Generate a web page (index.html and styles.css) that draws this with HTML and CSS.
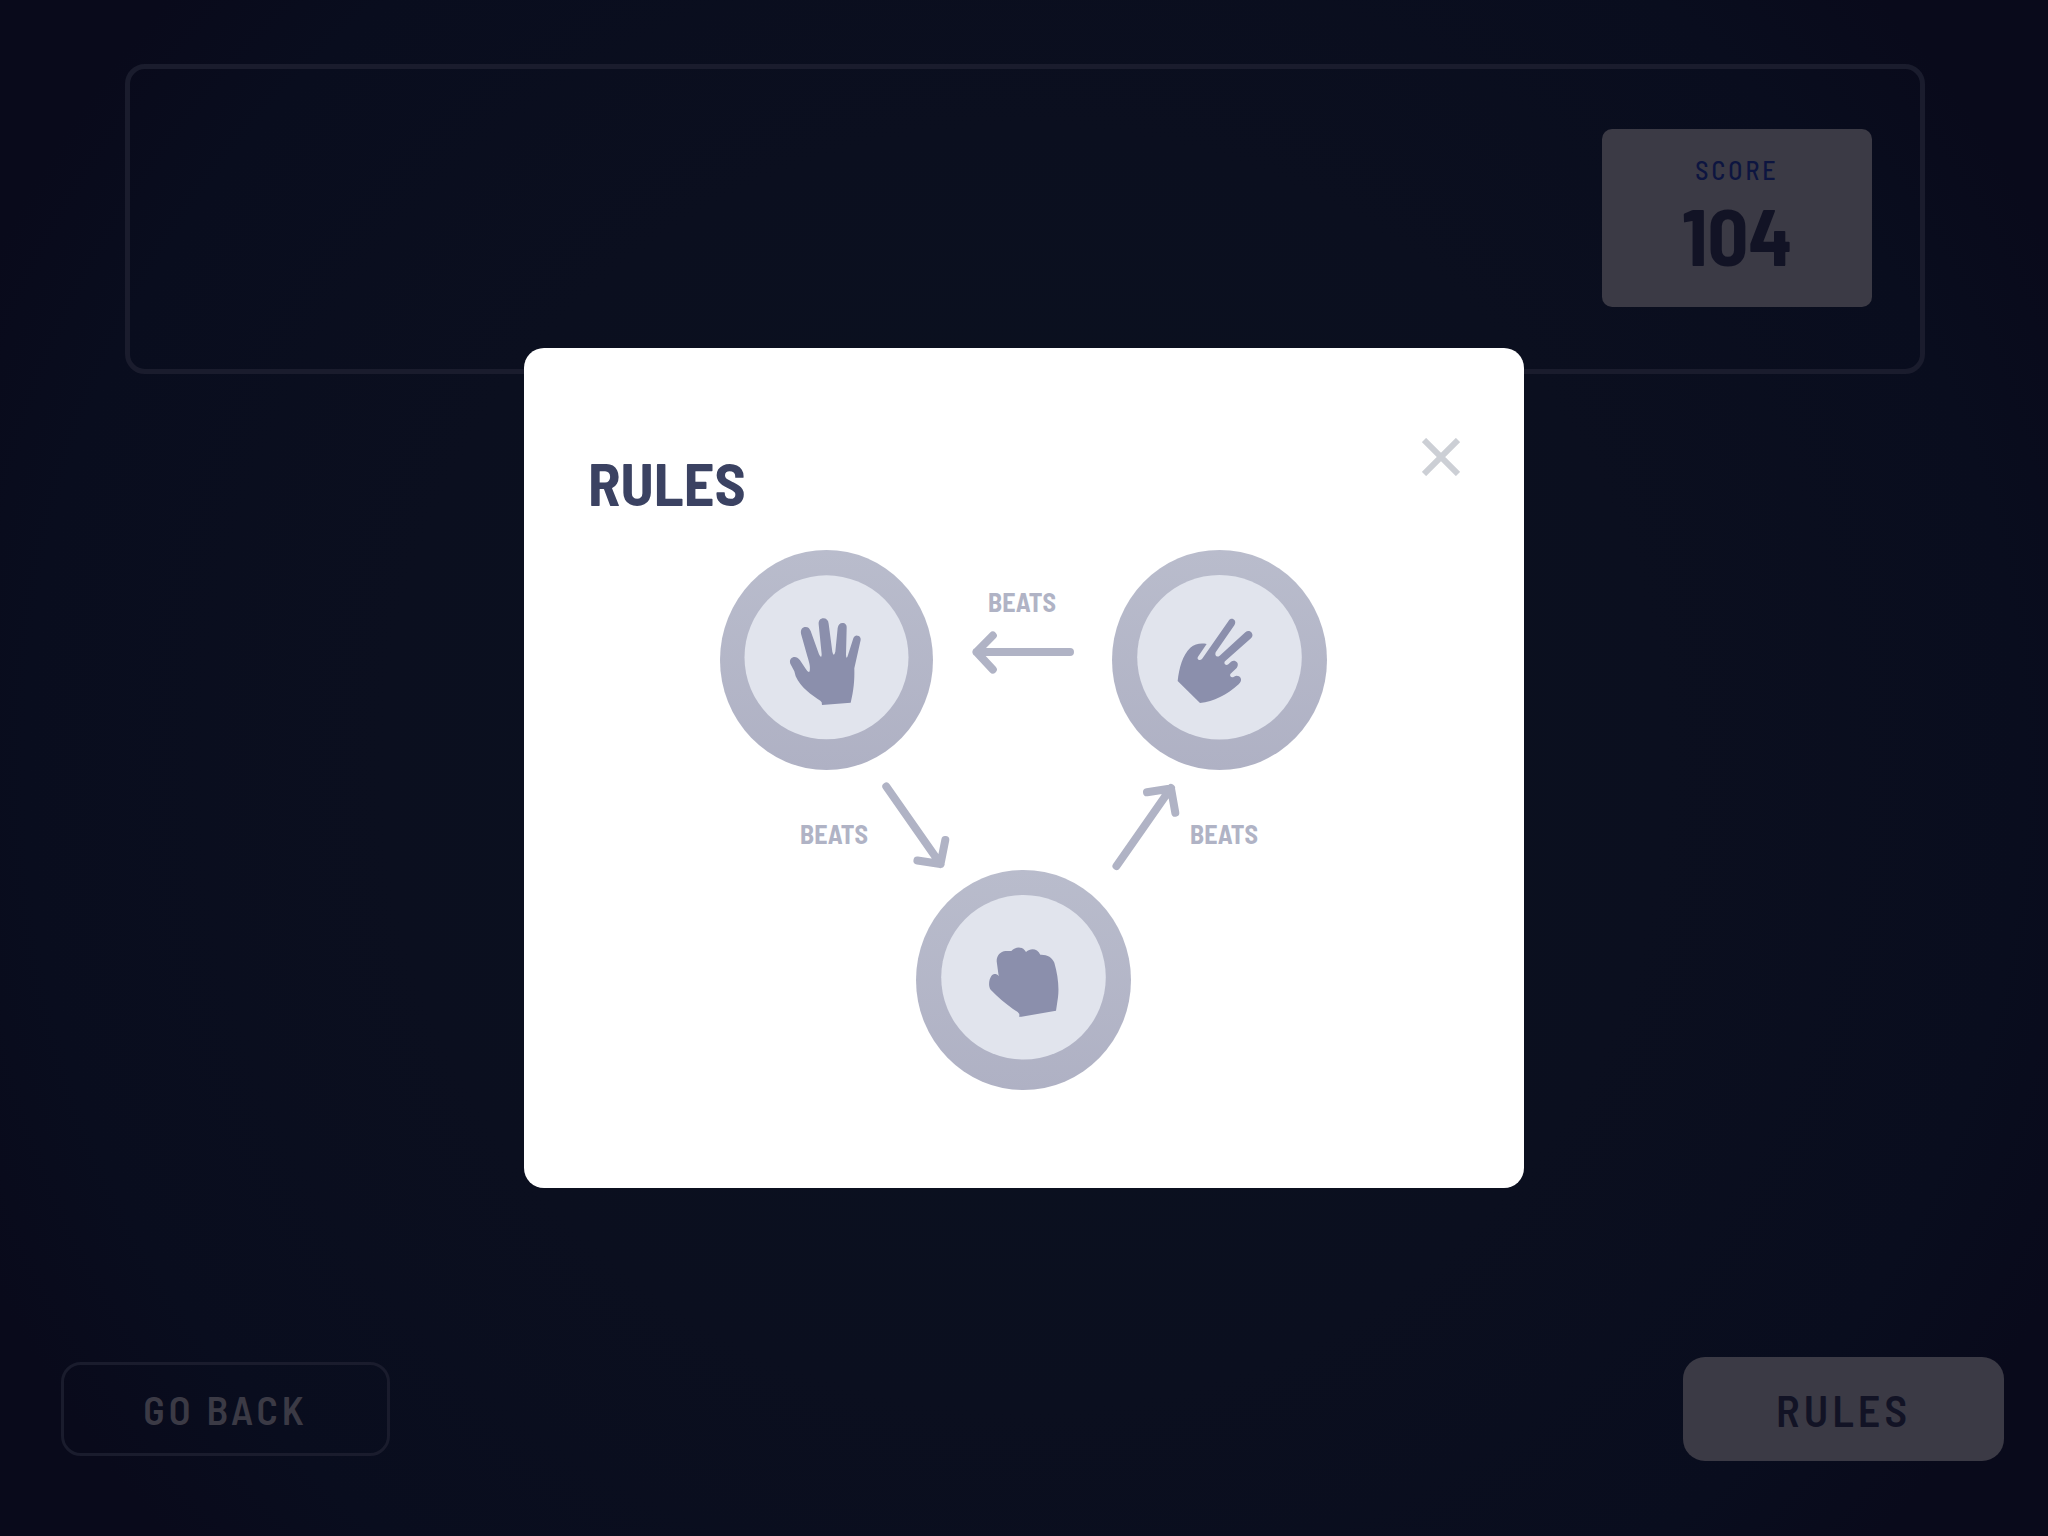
FILE: index.html
```html
<!DOCTYPE html>
<html lang="en">
<head>
<meta charset="utf-8">
<meta name="viewport" content="width=device-width, initial-scale=1">
<title>Rock Paper Scissors</title>
<link rel="stylesheet" href="styles.css">
</head>
<body>
<div class="game">
  <header class="scoreboard">
    <div class="score">
      <span class="score-label">SCORE</span>
      <strong class="score-value">104</strong>
    </div>
  </header>
  <footer class="actions">
    <button class="back" type="button">GO BACK</button>
    <button class="show-rules" type="button">RULES</button>
  </footer>
</div>

<div class="overlay">
  <dialog class="modal" open aria-labelledby="rules-title">
    <div class="modal-head">
      <h2 class="modal-title" id="rules-title">RULES</h2>
      <button class="close" type="button" aria-label="Close">
        <svg class="close-icon" viewBox="0 0 38 38" aria-hidden="true"><path d="M2 2 36 36M36 2 2 36"/></svg>
      </button>
    </div>
    <svg class="diagram" viewBox="720 550 608 540" role="img" aria-label="Scissors beats paper, paper beats rock, rock beats scissors">
      <defs>
        <linearGradient id="ring" x1="0" y1="0" x2="0" y2="1">
          <stop offset="0" stop-color="#b9bccc"/>
          <stop offset="1" stop-color="#afb1c4"/>
        </linearGradient>
      </defs>
      <g fill="url(#ring)">
        <ellipse cx="826.5" cy="660" rx="106.5" ry="110"/>
        <ellipse cx="1219.5" cy="660" rx="107.5" ry="110"/>
        <ellipse cx="1023.5" cy="980" rx="107.5" ry="110"/>
      </g>
      <g class="disc">
        <circle cx="826.5" cy="657.3" r="82"/>
        <circle cx="1219.5" cy="657.3" r="82.3"/>
        <circle cx="1023.5" cy="977.3" r="82.3"/>
      </g>
      <svg class="hand" x="770" y="600" width="110" height="120" viewBox="0 0 330 360">
        <path d="M156 315 155 307 151 302C125 286 92 262 77 229L73 214 61 191C57 178 65 171 74 171 80 171 84 174 90 181L107 206Q115 220 119 214C122 199 117 186 112 169L93 101C91 88 97 81 107 81 115 81 119 86 122 93L147 163Q155 178 155 163L146 73C145 61 152 55 160 55 169 55 175 61 176 71L187 155Q191 173 196 155L203 84C205 74 210 69 217 69 226 69 231 75 230 84L228 164Q229 182 234 165L250 115C253 109 257 106 262 107 269 107 273 113 272 120L253 205C254 242 251 272 242 308Z"/>
      </svg>
      <svg class="hand" x="1160" y="600" width="110" height="120" viewBox="0 0 330 360">
        <path d="M53 243C57 205 68 164 91 143 105 131 123 129 140 132L114 170C109 178 119 184 126 177L206 62C211 54 220 55 224 61 227 66 226 71 223 76L167 157C163 167 171 174 179 167L256 97C263 91 271 93 275 98 279 104 278 110 273 115L195 184C190 190 197 199 205 193L213 185C220 180 227 182 231 187 235 192 234 199 230 204L211 222C208 229 215 235 222 230 230 225 238 228 242 234 245 241 242 247 236 253 201 284 161 306 120 309Z"/>
      </svg>
      <svg class="hand" x="970" y="930" width="110" height="110" viewBox="0 0 330 330">
        <path d="M148 261V252L143 246 129 237C105 219 83 201 62 179 54 168 57 148 64 138 70 131 79 130 86 138L80 94C80 75 91 65 107 63L124 63C137 49 157 48 168 66 183 53 202 56 211 74 231 73 247 82 253 98 263 132 268 172 264 202L258 242Z"/>
      </svg>
      <g class="arrow">
        <path d="M992.8 635.5 976.5 652 992.8 669.5M976.5 652H1070"/>
        <path d="M886.3 786.5 940.5 864M945.3 840 940.5 864 917.4 860.5"/>
        <path d="M1116.5 866 1171 788M1147 792.3 1171 788.5 1175.3 812.7"/>
      </g>
      <g class="beats">
        <text x="1022" y="612">BEATS</text>
        <text x="834" y="844">BEATS</text>
        <text x="1224" y="844">BEATS</text>
      </g>
    </svg>
  </dialog>
</div>
</body>
</html>
```
FILE: styles.css
```css
* {
  box-sizing: border-box;
}

body {
  margin: 0;
  font-family: "Barlow Semi Condensed", "Roboto Condensed", "Liberation Sans Narrow", Roboto, sans-serif;
  background: #090a1b;
}

button {
  font-family: inherit;
  cursor: pointer;
}

.game {
  display: flex;
  flex-direction: column;
  justify-content: space-between;
  min-height: 100vh;
  padding: 64px 44px 75px 61px;
  background: radial-gradient(circle at center, #0b1220 0%, #0b0f1f 50%, #090d1e 78%, #090a1b 90%);
}

.scoreboard {
  display: flex;
  justify-content: flex-end;
  margin: 0 79px 0 64px;
  padding: 60px 48px 62px;
  border: 5px solid #1a1c2d;
  border-radius: 20px;
}

.score {
  display: flex;
  flex-direction: column;
  align-items: center;
  gap: 2px;
  width: 270px;
  padding: 23px 0 29px;
  border-radius: 10px;
  background: #3b3a45;
}

.score-label {
  font-size: 26px;
  font-weight: 500;
  line-height: 36px;
  letter-spacing: 3px;
  color: #0d1540;
}

.score-value {
  font-size: 80px;
  font-weight: 700;
  line-height: 88px;
  color: #121325;
}

.actions {
  display: flex;
  justify-content: space-between;
  align-items: center;
}

.back {
  width: 329px;
  height: 94px;
  border: 3px solid #1a1c2d;
  border-radius: 20px;
  background: transparent;
  font-size: 40px;
  font-weight: 600;
  letter-spacing: 4px;
  color: #3b3a45;
}

.show-rules {
  width: 321px;
  height: 104px;
  border: 0;
  border-radius: 22px;
  background: #3b3a45;
  font-size: 44px;
  font-weight: 600;
  letter-spacing: 4px;
  color: #121325;
}

.overlay {
  position: fixed;
  inset: 0;
  display: flex;
  align-items: center;
  justify-content: center;
}

.modal {
  position: static;
  display: flex;
  flex-direction: column;
  gap: 28px;
  width: 1000px;
  max-width: 100%;
  margin: 0;
  padding: 90px 64px 98px;
  border: 0;
  border-radius: 20px;
  background: #fff;
}

.modal-head {
  display: flex;
  justify-content: space-between;
  align-items: flex-start;
  padding-bottom: 4px;
}

.modal-title {
  margin: 0;
  padding-top: 8px;
  font-size: 60px;
  font-weight: 700;
  line-height: 72px;
  color: #3b4262;
}

.close {
  display: flex;
  padding: 0;
  border: 0;
  background: none;
}

.close-icon {
  width: 38px;
  height: 38px;
  fill: none;
  stroke: #cccfd5;
  stroke-width: 6;
}

.diagram {
  align-self: center;
  width: 608px;
  max-width: 100%;
}

.disc {
  fill: #e1e4ed;
}

.hand {
  fill: #8b8fac;
}

.arrow {
  fill: none;
  stroke: #b0b3c5;
  stroke-width: 8;
  stroke-linecap: round;
  stroke-linejoin: round;
}

.beats {
  font-size: 26px;
  font-weight: 700;
  text-anchor: middle;
  fill: #b0b3c5;
}
```
